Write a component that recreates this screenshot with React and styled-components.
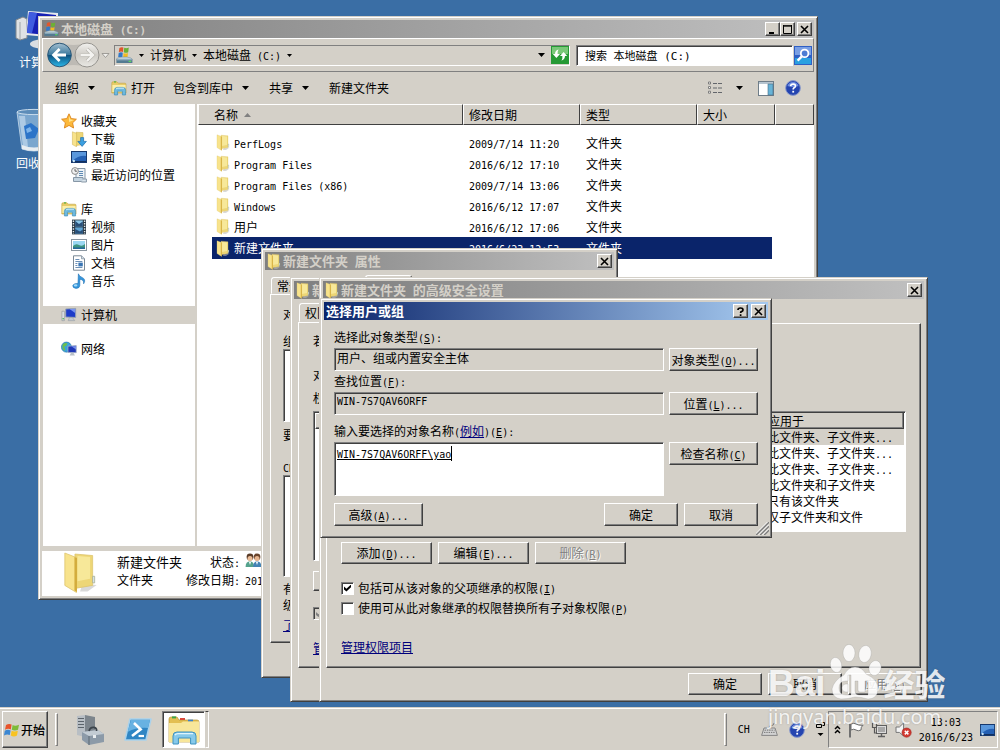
import React from "react";
import styled, { createGlobalStyle, css } from "styled-components";

const face = "#d4d0c8";
const cjk = '"Noto Sans CJK SC", "Liberation Sans", sans-serif';
const mono = '"DejaVu Sans Mono", "Noto Sans CJK SC", monospace';

const Global = createGlobalStyle`
  * { box-sizing: border-box; }
  html, body { margin: 0; }
  body { background: #3a6ea5; color: #000; font: 12px/16px ${cjk}; --latin: 10px; }
  svg { display: block; flex: none; }
  button, input, textarea { font: inherit; color: inherit; margin: 0; border-radius: 0; }
`;

const raised = css`
  background: ${face};
  border: 1px solid;
  border-color: #fff #404040 #404040 #fff;
  box-shadow: inset -1px -1px 0 #808080;
`;
const sunken = css`
  border: 1px solid;
  border-color: #808080 #fff #fff #808080;
  box-shadow: inset 1px 1px 0 #404040;
`;

/* ---------- text ---------- */
const Latin = styled.span`
  font-family: ${mono};
  font-size: var(--latin);
  line-height: 0;
  white-space: pre;
`;
const Key = styled.u``;

// Sets half-width runs in the fixed-width face; "_X" underlines the access key X.
function Text({ children }) {
  return String(children)
    .split(/([\x20-\x7e]+)/)
    .filter(Boolean)
    .map((run, i) => {
      if (!/^[\x20-\x7e]/.test(run)) return run;
      const parts = run.split(/_(\w)/);
      return (
        <Latin key={i}>
          {parts.map((p, j) => (j % 2 ? <Key key={j}>{p}</Key> : p))}
        </Latin>
      );
    });
}

/* ---------- icons ---------- */
const Folder = ({ w = 14, h = 17 }) => (
  <svg width={w} height={h} viewBox="0 0 14 17">
    <path d="M8 13 L13.6 13.4 L10 16 L7 16Z" fill="#b9b9b9" opacity=".55" />
    <path d="M5 1.2 L12 1.8 V13.6 L5 14.8Z" fill="#edd676" stroke="#dcc46c" strokeWidth=".3" />
    <path d="M6 2 L11 2.4 V11 L6 12Z" fill="#fdf3b0" opacity=".6" />
    <path d="M1 0.8 L5.6 2.6 V16.4 L1 13.6Z" fill="#f8e38c" stroke="#dcc46c" strokeWidth=".3" />
    <path d="M4.8 2.4 L5.8 2.8 V16.2 L4.8 15.6Z" fill="#d3ac3c" />
    <path d="M12 10 h.8 v2.6 h-.8z" fill="#dce9f2" stroke="#a4a98a" strokeWidth=".3" />
  </svg>
);
const Flag = ({ size = 16 }) => (
  <svg width={size} height={size} viewBox="0 0 16 16">
    <path d="M2 3 Q5 1 7.6 2.6 L6.8 7.4 Q4 6 1 7.8Z" fill="#e8532a" />
    <path d="M8.6 3 Q11 4.6 15 2.8 L14 7.8 Q11 9.4 7.8 7.8Z" fill="#7dbb38" />
    <path d="M.8 8.8 Q3.6 7 6.6 8.4 L5.8 13 Q3 11.6 0 13.4Z" fill="#3c87d2" />
    <path d="M7.6 8.8 Q10.4 10.4 13.8 8.8 L13 13.6 Q9.6 15.4 6.8 13.4Z" fill="#f8c322" />
  </svg>
);
const Drive = ({ size = 17 }) => (
  <svg width={size} height={size} viewBox="0 0 17 17">
    <path d="M3.4 1 Q5.6 -.4 7.4 .6 L7 5 Q5 4 2.8 5.2Z" fill="#e0562c" />
    <path d="M8.2 .8 Q10.4 1.8 12.8 .6 L12.2 5.2 Q10 6.2 7.8 5.2Z" fill="#6cb035" />
    <path d="M2.7 6 Q5 4.8 6.8 5.8 L6.3 10 H2.2Z" fill="#3278c8" />
    <path d="M7.6 6 Q9.6 7 12 6 L11.5 10 H7.2Z" fill="#f2bb20" />
    <path d="M1.4 11 L6 10 H11 L15 11 L16.4 12.4 H.4Z" fill="#c2d3dc" stroke="#6a8798" strokeWidth=".5" />
    <path d="M.4 12.4 H16.4 V16 H.4Z" fill="#547a91" />
    <path d="M1 12.8 H15.8" stroke="#9cb8c8" />
    <rect x="12.6" y="13.8" width="2.6" height="1.2" fill="#58dc58" />
  </svg>
);
const Library = ({ size = 16 }) => (
  <svg width={size} height={size} viewBox="0 0 16 16">
    <path d="M.8 3 Q.8 1.8 2 1.8 H6 L7.4 3.2 H14 Q15 3.2 15 4.4 V13 H.8Z" fill="#e8cc68" stroke="#c2a341" strokeWidth=".6" />
    <path d="M1.4 5 H14.6 V12 H1.4Z" fill="#fbeea8" />
    <path d="M3 1.9 h2" stroke="#5bb045" strokeWidth="1.2" />
    <path d="M3.4 15 V10.4 Q3.4 7.4 6.4 7.4 H12 Q14.6 7.4 14.6 10 V15 H11.4 V11.2 H6.6 V15Z" fill="#6db9e0" stroke="#3786b2" strokeWidth=".6" />
    <path d="M5 9 Q6 8.2 7 8.2 H13" stroke="#c9edfb" fill="none" />
  </svg>
);
const Star = () => (
  <svg width="16" height="16" viewBox="0 0 16 16">
    <path d="M8 .8 L10.2 5.6 L15.4 6.2 L11.6 9.8 L12.6 15 L8 12.4 L3.4 15 L4.4 9.8 L.6 6.2 L5.8 5.6Z" fill="#fcb93b" stroke="#dd851b" strokeWidth=".9" />
    <path d="M8 3 L9.4 6.6 L13 7 L8 9Z" fill="#ffe48e" />
  </svg>
);
const Download = () => (
  <svg width="16" height="16" viewBox="0 0 16 16">
    <path d="M5 1.2 L12 1.6 V13.6 L5 14.6Z" fill="#edd676" stroke="#cdb050" strokeWidth=".5" />
    <path d="M1.4 .8 L5.6 2.4 V15.8 L1.4 13.6Z" fill="#f8e38c" stroke="#cdb050" strokeWidth=".5" />
    <path d="M9.6 6.6 H12.6 V10.4 H15.4 L11.1 15.4 L6.8 10.4 H9.6Z" fill="#3b9fe0" stroke="#1e6fae" strokeWidth=".7" />
  </svg>
);
const DesktopIcon = ({ w = 16, h = 16 }) => (
  <svg width={w} height={h} viewBox="0 0 16 16" preserveAspectRatio="none">
    <rect x=".5" y="2.5" width="15" height="11" fill="#2460b4" stroke="#16386e" />
    <path d="M1 3 H15 V7 Q8 6 1 12Z" fill="#5a97dc" />
    <path d="M1 12.5 H15" stroke="#12305e" />
    <circle cx="2.8" cy="12" r="1.2" fill="#c7e6fb" />
  </svg>
);
const Recent = () => (
  <svg width="16" height="16" viewBox="0 0 16 16">
    <path d="M5 1.5 H14 V13.5 H5Z" fill="#eef3f7" stroke="#8797a6" />
    <path d="M8 4.5 h4 M8 6.5 h4 M8 8.5 h4" stroke="#5f8ab3" />
    <path d="M2.5 10.5 H12 V14.5 H2.5Z" fill="#c3d3df" stroke="#8797a6" />
    <path d="M12 12 h3.4 v3 h-5" fill="#dbe5ec" stroke="#8797a6" />
    <circle cx="4" cy="4" r="3.4" fill="#f1f1f1" stroke="#8a8a8a" />
    <path d="M4 2 V4.2 H6" stroke="#444" fill="none" strokeWidth=".8" />
  </svg>
);
const Video = () => (
  <svg width="16" height="16" viewBox="0 0 16 16">
    <rect x="1" y=".6" width="14" height="14.8" fill="#2b3a46" />
    <path d="M2.4 1.5 V15 M13.6 1.5 V15" stroke="#dfe6ea" strokeWidth="1.4" strokeDasharray="1.4 1.2" />
    <rect x="4.2" y="1.4" width="7.6" height="6" fill="#8cc7e8" />
    <rect x="4.2" y="8.4" width="7.6" height="6.2" fill="#5fa4d4" />
    <path d="M4.2 2 L8 5 L11.8 2.4 V7.4 H4.2Z M4.2 10 L9 12.6 L11.8 10.6 V14.6 H4.2Z" fill="#294f78" />
  </svg>
);
const Picture = () => (
  <svg width="16" height="16" viewBox="0 0 16 16">
    <rect x=".5" y="2.5" width="15" height="11" fill="#fff" stroke="#8b97a1" />
    <rect x="2" y="4" width="12" height="8" fill="#9bd7f2" />
    <path d="M2 9 Q5 6 8 8 T14 7 V12 H2Z" fill="#3e9480" />
    <path d="M2 10.4 H14 V12 H2Z" fill="#256a9a" />
  </svg>
);
const Doc = () => (
  <svg width="16" height="16" viewBox="0 0 16 16">
    <path d="M2.5 .8 H10.5 L13.5 3.8 V15.2 H2.5Z" fill="#fff" stroke="#7a8996" />
    <path d="M10.5 .8 V3.8 H13.5" fill="#d0dbe5" stroke="#7a8996" strokeWidth=".7" />
    <path d="M4.4 4.5 h4 M4.4 6.5 h7 M4.4 12.5 h7" stroke="#6b8fb5" />
    <rect x="7.4" y="7.6" width="4.4" height="3.8" fill="#3975b4" />
    <path d="M4.4 8.5 h2 M4.4 10.5 h2" stroke="#6b8fb5" />
  </svg>
);
const Music = () => (
  <svg width="16" height="16" viewBox="0 0 16 16">
    <path d="M7.4 .8 Q8 3.4 11 4.4 Q15.4 6.4 12.6 10.8 Q13.4 6.8 8.8 6.2 V12.4 Q8.6 15.4 5 15.4 Q1.6 15 1.8 12.6 Q2.4 10.2 7 10.4Z" fill="#3697dd" stroke="#1b6fb3" strokeWidth=".6" />
    <ellipse cx="4.6" cy="12.4" rx="1.8" ry="1.1" fill="#a5dbf8" />
  </svg>
);
const Computer = () => (
  <svg width="16" height="16" viewBox="0 0 17 16">
    <path d="M1 4 h2.6 v10 h-2.6z" fill="#dfe3e6" stroke="#858c92" strokeWidth=".6" />
    <circle cx="2.3" cy="12" r=".8" fill="#38b03c" />
    <path d="M5 1.6 L15.6 1 V10.6 L5 10.2Z" fill="#1e3cc8" stroke="#9aa5b4" />
    <path d="M9 1.6 H15 V6Z" fill="#7793f2" />
    <path d="M9 10.6 h3 l2.6 3.4 h-7z" fill="#c3c9cf" stroke="#8b929a" strokeWidth=".5" />
  </svg>
);
const Network = () => (
  <svg width="16" height="16" viewBox="0 0 17 16">
    <circle cx="5.8" cy="6" r="5.4" fill="#3aa2dc" stroke="#1e6ca2" strokeWidth=".6" />
    <path d="M2 3 Q5 .6 7 2.4 L5 5 L3 5.6 L4.6 8 L3.4 10 Q.4 7 2 3Z" fill="#6cbf4e" />
    <path d="M7.4 5 L16.2 4.4 V12 L7.4 11.6Z" fill="#2038b8" stroke="#aab3c4" strokeWidth=".8" />
    <path d="M11 5 H16 V8.6Z" fill="#7690ec" />
    <path d="M10.6 12 h2.6 l1.6 2.8 h-5.6z" fill="#b9c0c8" />
  </svg>
);
const Users = () => (
  <svg width="17" height="15" viewBox="0 0 17 15">
    <circle cx="5" cy="4" r="3.4" fill="#5a3c28" />
    <circle cx="5" cy="5.4" r="2.5" fill="#ebbd98" />
    <path d="M.6 14 Q.6 8.6 5 8.6 Q9 8.6 9 14Z" fill="#54a28c" />
    <circle cx="12" cy="4" r="3.4" fill="#6a442c" />
    <circle cx="12" cy="5.4" r="2.5" fill="#e6b590" />
    <path d="M8 14 Q8 8.6 12 8.6 Q16.4 8.6 16.4 14Z" fill="#4483b4" />
    <path d="M4 9 l1 3 l1 -3 M11 9 l1 3 l1 -3" fill="#fff" />
  </svg>
);
const Caret = () => (
  <svg width="7" height="4" viewBox="0 0 7 4"><path d="M0 0 H7 L3.5 4Z" fill="#000" /></svg>
);
const SmallCaret = () => (
  <svg width="5" height="3" viewBox="0 0 5 3"><path d="M0 0 H5 L2.5 3Z" fill="#000" /></svg>
);
const NavArrows = () => (
  <svg width="64" height="26" viewBox="0 0 64 26">
    <defs>
      <linearGradient id="back" x1="0" y1="0" x2="0" y2="1">
        <stop offset="0" stopColor="#a4bfd0" /><stop offset=".48" stopColor="#3d7a9e" />
        <stop offset=".5" stopColor="#0c4f7c" /><stop offset="1" stopColor="#2cb8ea" />
      </linearGradient>
      <linearGradient id="fwd" x1="0" y1="0" x2="0" y2="1">
        <stop offset="0" stopColor="#f2f1ee" /><stop offset=".5" stopColor="#cfccc6" /><stop offset="1" stopColor="#e9e8e4" />
      </linearGradient>
    </defs>
    <path d="M12 1 Q27 5 40 1 V25 Q27 21 12 25Z" fill="#bdbab4" />
    <circle cx="12.5" cy="13" r="11.8" fill="url(#back)" stroke="#2b5777" />
    <circle cx="40" cy="13" r="12" fill="url(#fwd)" stroke="#96948f" />
    <path d="M12.6 7 L6.6 13 L12.6 19 M7 13 H19" stroke="#fff" strokeWidth="2.8" fill="none" />
    <path d="M40 7 L46 13 L40 19 M45.6 13 H33.6" stroke="#b7b4ae" strokeWidth="3.6" fill="none" />
    <path d="M40 7 L46 13 L40 19 M45.6 13 H33.6" stroke="#f4f3f0" strokeWidth="2.4" fill="none" />
    <path d="M55 11.5 H62 L58.5 15.5Z" fill="#f0efec" stroke="#8e8b86" strokeWidth=".8" />
  </svg>
);
const Refresh = () => (
  <svg width="18" height="18" viewBox="0 0 18 18">
    <rect width="18" height="18" fill="#269a35" />
    <rect x="1" y="1" width="16" height="7" fill="#79c878" />
    <path d="M7.6 3.6 Q6.4 5 6.6 8 H9 L5.4 12 L1.8 8 H4 Q4.2 4.4 7.6 3.6Z M10.4 14.6 Q11.6 13 11.4 10 H9 L12.6 6 L16.2 10 H14 Q13.8 13.8 10.4 14.6Z" fill="#fff" />
  </svg>
);
const Magnifier = () => (
  <svg width="18" height="19" viewBox="0 0 18 19">
    <rect width="18" height="19" fill="#2f5fc4" />
    <rect x="1" y="1" width="16" height="8" fill="#7a9fe4" />
    <path d="M1 12 H17 V18 H1Z" fill="#2aa0e0" />
    <circle cx="10.6" cy="7.4" r="3.8" fill="#4d7cd4" stroke="#fff" strokeWidth="1.8" />
    <path d="M7.8 10.4 L3.6 14.6" stroke="#fff" strokeWidth="2.4" />
  </svg>
);
const Views = () => (
  <svg width="16" height="14" viewBox="0 0 16 14">
    <path d="M1.5 1 h2v2h-2z M1.5 5.6 h2v2h-2z M1.5 10.2 h2v2h-2z" fill="#fff" stroke="#7b7b7b" />
    <path d="M6 2.5 h4 M11 2.5 h4 M6 7 h4 M11 7 h4 M6 11.5 h4 M11 11.5 h4" stroke="#63666b" />
  </svg>
);
const Pane = () => (
  <svg width="16" height="15" viewBox="0 0 16 15">
    <rect x=".5" y=".5" width="15" height="14" fill="#fff" stroke="#6f7d88" />
    <rect x="1" y="1" width="14" height="2" fill="#b6c4cf" />
    <rect x="10" y="3" width="5" height="11" fill="#67b3d6" stroke="#456d85" strokeWidth=".6" />
  </svg>
);
const Help = () => (
  <svg width="16" height="16" viewBox="0 0 16 16">
    <circle cx="8" cy="8" r="7.4" fill="#2444b0" stroke="#8d9ccb" />
    <path d="M2.4 6 Q4 2 8 2 T13.6 6 Q8 8 2.4 6Z" fill="#6f8de0" />
    <path d="M5.6 6.2 Q5.8 4 8.2 4 Q10.6 4.2 10.4 6.2 Q10.2 7.4 8.8 8 Q8.2 8.4 8.2 9.6" stroke="#fff" strokeWidth="1.7" fill="none" />
    <rect x="7.3" y="10.8" width="1.8" height="1.8" fill="#fff" />
  </svg>
);
const BigComputer = () => (
  <svg width="44" height="40" viewBox="0 0 44 40">
    <path d="M1 9 L8 6 L12 8 V27 L5 29 L1 27Z" fill="#dfe2e4" stroke="#80868b" />
    <path d="M5 11 V28" stroke="#9fa5aa" />
    <path d="M13 0 L43 2 V27 L11 24Z" fill="#e6e9ee" />
    <path d="M14 1 L41 4 V25 L12 22Z" fill="#1620b4" />
    <path d="M14 1 L22 2 L17 22 L12 22Z" fill="#3f5ce0" />
    <ellipse cx="27" cy="33" rx="12" ry="4.5" fill="#d9dde2" />
  </svg>
);
const Bin = () => (
  <svg width="38" height="44" viewBox="0 0 38 44">
    <path d="M2 4 L36 4 L31 41 Q19 45 7 41Z" fill="#86b0d6" opacity=".85" stroke="#c9dcec" />
    <path d="M4 8 L8 38 L13 40 L10 8Z" fill="#c3daee" opacity=".7" />
    <path d="M9 18 l7 -3 l8 6 l-4 9 l-9 1z" fill="#2c74c8" />
    <path d="M11 21 l4 -2 l2 4 l-5 2z" fill="#7db4ea" />
    <ellipse cx="19" cy="4" rx="17" ry="2.6" fill="#5d8db9" stroke="#c9dcec" />
    <path d="M7 37 Q19 42 31 37 V41 Q19 45 7 41Z" fill="#e8edf1" />
  </svg>
);
const ServerTools = () => (
  <svg width="28" height="30" viewBox="0 0 28 30">
    <path d="M1 1 L9 0 V22 L1 20Z" fill="#b8bec4" /><path d="M9 0 L19 2 V22 H9Z" fill="#7d858c" />
    <path d="M2 3.5 H8 M2 6.5 H8 M2 9.5 H8 M2 12.5 H8" stroke="#5c646b" />
    <path d="M6 17 L22 15 L28 19 V27 L13 30 L6 25Z" fill="#8c9aa8" />
    <path d="M6 17 L22 15 L28 19 L13 21Z" fill="#c3ccd4" />
    <path d="M13 21 V30" stroke="#5d6873" />
    <path d="M13 16 Q14 12 18 12.4 Q21 13 20.6 16" stroke="#3d444b" fill="none" strokeWidth="1.6" />
    <rect x="17" y="20" width="3" height="3" fill="#e9edf0" />
  </svg>
);
const PowerShell = () => (
  <svg width="30" height="26" viewBox="0 0 30 26">
    <path d="M7 2 H28 L23 23 H2Z" fill="#2f86c4" stroke="#a9d2ec" strokeWidth="1.6" strokeLinejoin="round" />
    <path d="M8 3 H27 L25 11 Q14 10 4.6 15Z" fill="#68b2e2" />
    <path d="M11 6 L17.6 12.4 L9 19" stroke="#fff" strokeWidth="2.6" fill="none" />
    <path d="M15.6 19 H21" stroke="#fff" strokeWidth="2.2" />
  </svg>
);
const Explorer = () => (
  <svg width="34" height="30" viewBox="0 0 34 30">
    <path d="M2 4 Q2 2 4 2 H10 L12 5 H30 Q32 5 32 7 V27 H2Z" fill="#e3bf52" stroke="#b8953a" strokeWidth=".7" />
    <path d="M5 2.4 h4" stroke="#3da447" strokeWidth="2" /><path d="M13 4 h5" stroke="#d94a3a" strokeWidth="2" /><path d="M21 5.6 h5" stroke="#3b80c8" strokeWidth="2" />
    <path d="M2 8 H14 L16 6.6 H32 V27 H2Z" fill="#f8e69a" />
    <path d="M6 29 V21 Q6 17 10 17 H25 Q29 17 29 21 V29 H23.6 V23 H11.4 V29Z" fill="#86c9ea" stroke="#3e92bf" />
    <path d="M8 20 Q9 18.6 11 18.6 H26" stroke="#dff5fd" fill="none" strokeWidth="1.4" />
  </svg>
);
const Keyboard = () => (
  <svg width="17" height="13" viewBox="0 0 17 13">
    <path d="M3 5 H14 L16.4 12.4 H.6Z" fill="#d2d2d2" stroke="#868686" />
    <path d="M3.6 7.2 H13.6 M3 9.4 H14" stroke="#777" strokeDasharray="1.4 .9" />
    <path d="M8 5 Q8 2.4 10.4 2.6 T13 0" stroke="#868686" fill="none" />
  </svg>
);
const Restore = () => (
  <svg width="9" height="16" viewBox="0 0 9 16">
    <path d="M3.5 .5 h5 v3 h-2 M.5 2.5 h5 v3 h-5z" stroke="#000" fill="none" />
    <path d="M1.5 11 h6 L4.5 14Z" fill="#000" />
  </svg>
);
const Chevrons = () => (
  <svg width="7" height="9" viewBox="0 0 7 9">
    <path d="M1 4 L3.5 1.4 L6 4 M1 8 L3.5 5.4 L6 8" stroke="#000" strokeWidth="1.4" fill="none" />
  </svg>
);
const WhiteFlag = () => (
  <svg width="16" height="16" viewBox="0 0 16 16">
    <path d="M2 1 V15.5" stroke="#707070" strokeWidth="2" />
    <path d="M3 2 Q6 .6 8 2 T15 3.4 Q12.6 4.6 13 8 Q10 9.6 8 8 T3 8Z" fill="#fff" stroke="#6d6d6d" />
  </svg>
);
const Lan = () => (
  <svg width="17" height="16" viewBox="0 0 17 16">
    <rect x="5.5" y="3.5" width="10" height="8" fill="#dcdcdc" stroke="#606060" />
    <rect x="7" y="5" width="7" height="5" fill="#a8a8a8" />
    <path d="M7 14.5 H14 M10.5 12 V14" stroke="#606060" strokeWidth="1.4" />
    <path d="M1.5 1 V5.5 H5.5 V1 M3.5 5.5 V11 H6" stroke="#585858" fill="none" strokeWidth="1.2" />
  </svg>
);
const Speaker = () => (
  <svg width="17" height="16" viewBox="0 0 17 16">
    <path d="M1 5 H4.4 L8.6 1 V14 L4.4 10.4 H1Z" fill="#f3f3f3" stroke="#777" />
    <circle cx="11.6" cy="10.6" r="4.6" fill="#d23a32" stroke="#9f221d" strokeWidth=".6" />
    <path d="M9.8 8.8 L13.4 12.4 M13.4 8.8 L9.8 12.4" stroke="#fff" strokeWidth="1.5" />
  </svg>
);

/* ---------- window frame ---------- */
const Window = styled.section`
  position: absolute;
  left: ${(p) => p.$x}px;
  top: ${(p) => p.$y}px;
  width: ${(p) => p.$w}px;
  padding: 3px;
  background: ${face};
  border: 1px solid;
  border-color: ${face} #404040 #404040 ${face};
  box-shadow: inset 1px 1px 0 #fff, inset -1px -1px 0 #808080;
`;
const TitleBar = styled.header`
  display: flex;
  align-items: center;
  gap: 2px;
  height: 18px;
  padding: 0 2px;
  font-weight: 700;
  font-size: 13px;
  --latin: 11px;
  white-space: nowrap;
  color: ${(p) => (p.$active ? "#fff" : face)};
  background: linear-gradient(90deg, ${(p) => (p.$active ? "#0a246a, #a6caf0" : "#808080, #c0c0c0")});
`;
const TitleText = styled.h2`
  flex: 1;
  margin: 0;
  font: inherit;
`;
const CaptionButtons = styled.div`
  display: flex;
  gap: ${(p) => p.$gap || 0}px;
`;
const CaptionButton = styled.button`
  ${raised}
  display: grid;
  place-items: center;
  width: 15px;
  height: 14px;
  padding: 0;
`;
const glyphs = {
  close: <path d="M1 1 L8 8 M8 1 L1 8" stroke="#000" strokeWidth="1.6" />,
  min: <path d="M1 8 H6" stroke="#000" strokeWidth="2" />,
  max: <path d="M.5 1 H8.5 M.5 0 V8.5 H8.5 V0 M0 .8 H9" stroke="#000" fill="none" />,
  help: <path d="M2 3 Q2 1 4.5 1 T7 3 Q7 4 5.4 4.6 Q4.6 5 4.6 6 M4.6 7.2 V9" stroke="#000" strokeWidth="1.7" fill="none" />,
};
const Caption = ({ kind, label }) => (
  <CaptionButton type="button" aria-label={label}>
    <svg width="9" height="9" viewBox="0 0 9 9">{glyphs[kind]}</svg>
  </CaptionButton>
);

const Button = styled.button`
  ${raised}
  width: ${(p) => p.$w || 74}px;
  height: ${(p) => p.$h || 23}px;
  padding: 0;
  white-space: nowrap;
  &:disabled { color: #808080; text-shadow: 1px 1px 0 #fff; }
`;
const Link = styled.a`
  color: #00007b;
  text-decoration: underline;
`;
const Tabs = styled.div`
  display: flex;
  align-items: flex-end;
  height: ${(p) => p.$h}px;
  padding-left: ${(p) => p.$x}px;
`;
const Tab = styled.button`
  width: 47px;
  height: ${(p) => (p.$on ? 19 : 17)}px;
  padding: 0 5px;
  background: ${face};
  border: 1px solid;
  border-color: #fff #404040 transparent #fff;
  border-radius: 3px 3px 0 0;
  text-align: left;
`;
const Page = styled.div`
  display: flex;
  flex-direction: column;
  align-items: flex-start;
  margin: 0 ${(p) => p.$side}px;
  border: 1px solid;
  border-color: #fff #404040 #404040 #fff;
  box-shadow: inset -1px -1px 0 #808080;
`;

/* ---------- explorer ---------- */
const AddressBar = styled.div`
  display: flex;
  align-items: center;
  height: 34px;
  padding: 0 1px 0 4px;
  border: 1px solid;
  border-color: #fff #808080 #808080 #fff;
`;
const Crumbs = styled.nav`
  ${sunken}
  box-shadow: none;
  flex: 1;
  display: flex;
  align-items: center;
  gap: 6px;
  height: 21px;
  margin-left: 3px;
  padding-left: 1px;
`;
const Crumb = styled.a`
  color: inherit;
  text-decoration: none;
`;
const IconButton = styled.button`
  display: grid;
  place-items: center;
  padding: 0;
  border: 0;
  background: none;
`;
const Push = styled.span`
  margin-left: auto;
`;
const SearchInput = styled.input`
  ${sunken}
  width: 217px;
  height: 21px;
  margin: 0 1px 0 6px;
  padding: 0 8px;
  background: #fff;
  font: 11px/16px ${mono};
`;
const Toolbar = styled.div`
  display: flex;
  align-items: center;
  height: 32px;
  padding: 0 13px;
`;
const ToolButton = styled.button`
  display: flex;
  align-items: center;
  gap: ${(p) => p.$gap || 9}px;
  margin-right: ${(p) => p.$after || 0}px;
  padding: 0;
  border: 0;
  background: none;
`;
const Panes = styled.div`
  display: flex;
  min-height: 442px;
`;
const Tree = styled.nav`
  width: 153px;
  padding-top: 8px;
  background: #fff;
  border-left: 1px solid ${face};
`;
const Group = styled.ul`
  list-style: none;
  margin: 0 0 16px;
  padding: 0;
`;
const TreeItem = styled.li`
  display: flex;
  align-items: center;
  gap: 4px;
  height: 18px;
  padding-left: ${(p) => (p.$deep ? 28 : 18)}px;
  background: ${(p) => (p.$on ? face : "none")};
`;
const FileArea = styled.div`
  flex: 1;
  margin-left: 2px;
  background: #fff;
  border-left: 1px solid #fff;
`;
const Files = styled.table`
  width: 100%;
  table-layout: fixed;
  border-spacing: 0;
  td, th { padding: 0; text-align: left; font-weight: 400; white-space: nowrap; }
  tbody::before { content: ""; display: block; height: 7px; }
`;
const HeadCell = styled.th`
  height: 21px;
  background: ${face};
  border: 1px solid;
  border-color: #fff #404040 #404040 #fff;
  && { padding-left: ${(p) => p.$pad || 5}px; }
`;
const HeadLabel = styled.span`
  display: flex;
  align-items: center;
  gap: 6px;
`;
const Row = styled.tr`
  height: ${(p) => (p.$on ? 22 : 21)}px;
  color: ${(p) => (p.$on ? "#fff" : "#000")};
  td { background: ${(p) => (p.$on ? "#0a246a" : "none")}; background-clip: padding-box; }
  && td { padding-left: 6px; }
  && td:first-child { padding-left: 4px; border-left: 14px solid transparent; }
  && td:nth-child(4) { border-right: 3px solid transparent; }
  && td:last-child { background: none; }
`;
const NameCell = styled.span`
  display: flex;
  align-items: center;
  gap: 4px;
`;
const Details = styled.footer`
  display: flex;
  height: 45px;
  margin-top: 5px;
  padding-left: 18px;
  background: #fff;
`;
const DetailCol = styled.div`
  display: flex;
  flex-direction: column;
  align-items: ${(p) => (p.$end ? "flex-end" : "flex-start")};
  margin-left: ${(p) => p.$before}px;
  line-height: 18px;
  padding-top: 2px;
`;
const DetailName = styled.strong`
  font-weight: 400;
  font-size: 13px;
`;
const DetailIcon = styled.span`
  height: 18px;
`;

const files = [
  ["PerfLogs", "2009/7/14 11:20"],
  ["Program Files", "2016/6/12 17:10"],
  ["Program Files (x86)", "2009/7/14 13:06"],
  ["Windows", "2016/6/12 17:07"],
  ["用户", "2016/6/12 17:06"],
  ["新建文件夹", "2016/6/23 12:53"],
];
const tree = [
  [[Star, "收藏夹"], [Download, "下载"], [DesktopIcon, "桌面"], [Recent, "最近访问的位置"]],
  [[Library, "库"], [Video, "视频"], [Picture, "图片"], [Doc, "文档"], [Music, "音乐"]],
  [[Computer, "计算机"]],
  [[Network, "网络"]],
];

function ExplorerWindow() {
  return (
    <Window $x={38} $y={16} $w={780}>
      <TitleBar>
        <Drive size={15} />
        <TitleText><Text>本地磁盘 (C:)</Text></TitleText>
        <CaptionButtons>
          <Caption kind="min" label="最小化" />
          <Caption kind="max" label="最大化" />
        </CaptionButtons>
        <Caption kind="close" label="关闭" />
      </TitleBar>
      <AddressBar>
        <NavArrows />
        <Crumbs>
          <Drive />
          <SmallCaret />
          <Crumb href="#computer">计算机</Crumb>
          <SmallCaret />
          <Crumb href="#disk"><Text>本地磁盘 (C:)</Text></Crumb>
          <SmallCaret />
          <Push><Caret /></Push>
          <IconButton type="button" aria-label="刷新"><Refresh /></IconButton>
        </Crumbs>
        <SearchInput aria-label="搜索" defaultValue="搜索 本地磁盘 (C:)" />
        <IconButton type="button" aria-label="搜索"><Magnifier /></IconButton>
      </AddressBar>
      <Toolbar>
        <ToolButton $after={16}>组织<Caret /></ToolButton>
        <ToolButton $gap={4} $after={18}><Library />打开</ToolButton>
        <ToolButton $after={20}>包含到库中<Caret /></ToolButton>
        <ToolButton $after={20}>共享<Caret /></ToolButton>
        <ToolButton>新建文件夹</ToolButton>
        <Push />
        <ToolButton $gap={13} $after={15} aria-label="视图"><Views /><Caret /></ToolButton>
        <ToolButton $after={11} aria-label="预览窗格"><Pane /></ToolButton>
        <ToolButton aria-label="帮助"><Help /></ToolButton>
      </Toolbar>
      <Panes>
        <Tree>
          {tree.map((group, g) => (
            <Group key={g}>
              {group.map(([Icon, label], i) => (
                <TreeItem key={label} $deep={i > 0} $on={label === "计算机"}>
                  <Icon />{label}
                </TreeItem>
              ))}
            </Group>
          ))}
        </Tree>
        <FileArea>
          <Files>
            <colgroup>
              <col style={{ width: 265 }} />
              <col style={{ width: 117 }} />
              <col style={{ width: 117 }} />
              <col style={{ width: 78 }} />
              <col />
            </colgroup>
            <thead>
              <tr>
                <HeadCell $pad={15}>
                  <HeadLabel>
                    名称
                    <svg width="7" height="4" viewBox="0 0 7 4"><path d="M0 4 H7 L3.5 0Z" fill="#808080" /></svg>
                  </HeadLabel>
                </HeadCell>
                <HeadCell>修改日期</HeadCell>
                <HeadCell>类型</HeadCell>
                <HeadCell>大小</HeadCell>
                <HeadCell />
              </tr>
            </thead>
            <tbody>
              {files.map(([name, date], i) => (
                <Row key={name} $on={i === 5}>
                  <td><NameCell><Folder /><span><Text>{name}</Text></span></NameCell></td>
                  <td><Text>{date}</Text></td>
                  <td>文件夹</td>
                  <td />
                  <td />
                </Row>
              ))}
            </tbody>
          </Files>
        </FileArea>
      </Panes>
      <Details>
        <Folder w={40} h={43} />
        <DetailCol $before={17}>
          <DetailName>新建文件夹</DetailName>
          <span>文件夹</span>
        </DetailCol>
        <DetailCol $before={4} $end>
          <span><Text>状态:</Text></span>
          <span><Text>修改日期:</Text></span>
        </DetailCol>
        <DetailCol $before={5}>
          <DetailIcon><Users /></DetailIcon>
          <span><Text>2016/6/23 12:53</Text></span>
        </DetailCol>
      </Details>
    </Window>
  );
}

/* ---------- property sheets ---------- */
const Line = styled.p`
  margin: ${(p) => p.$before || 0}px 0 0;
  line-height: 16px;
  white-space: nowrap;
`;
const ListBox = styled.div`
  ${sunken}
  align-self: stretch;
  height: ${(p) => p.$h}px;
  margin: ${(p) => p.$before || 0}px 14px 0 0;
  background: #fff;
`;
const SheetBody = styled(Page)`
  height: ${(p) => p.$h}px;
  padding: ${(p) => p.$top}px 0 0 ${(p) => p.$left}px;
`;
const ListHead = styled.div`
  ${raised}
  height: 16px;
  margin: 1px;
`;
const Foot = styled.footer`
  height: ${(p) => p.$h}px;
`;

function PropertiesWindow() {
  return (
    <Window $x={261} $y={248} $w={357}>
      <TitleBar>
        <Folder />
        <TitleText><Text>新建文件夹 属性</Text></TitleText>
        <Caption kind="close" label="关闭" />
      </TitleBar>
      <Tabs $h={24} $x={6}>
        <Tab>常规</Tab><Tab>共享</Tab><Tab $on>安全</Tab>
      </Tabs>
      <SheetBody $side={5} $h={349} $top={11} $left={12}>
        <Line>对象名称</Line>
        <Line $before={11}>组或用户名</Line>
        <ListBox $h={73} />
        <Line $before={5}>要更改权限</Line>
        <Line $before={16}><Text>CREATOR OWNER</Text></Line>
        <ListBox $h={102} />
        <Line $before={4}>有关特殊权限</Line>
        <Line>级设置</Line>
        <Line $before={4}><Link href="#learn">了解访问控制和权限</Link></Line>
      </SheetBody>
      <Foot $h={31} />
    </Window>
  );
}

function AdvancedWindow() {
  return (
    <Window $x={290} $y={277} $w={600}>
      <TitleBar>
        <Folder />
        <TitleText>新建文件夹</TitleText>
      </TitleBar>
      <Tabs $h={23} $x={5}><Tab $on>权限</Tab></Tabs>
      <SheetBody $side={4} $h={346} $top={10} $left={14}>
        <Line>若要查看</Line>
        <Line $before={18}>对象名称</Line>
        <Line $before={7}>权限项目</Line>
        <ListBox $h={150} $before={5}><ListHead /></ListBox>
        <Line $before={10}><Button $h={20}>更改权限</Button></Line>
        <Line $before={16}><CheckBox type="checkbox" aria-label="继承" defaultChecked disabled /></Line>
        <Line $before={20}><Link href="#manage">管理权限</Link></Line>
      </SheetBody>
      <Foot $h={30} />
    </Window>
  );
}

const CheckBox = styled.input`
  ${sunken}
  appearance: none;
  display: grid;
  place-items: center;
  flex: none;
  width: 13px;
  height: 13px;
  background: #fff;
  &:disabled { background: ${face}; color: #808080; }
  &:checked::before {
    content: "";
    width: 7px;
    height: 7px;
    background: currentColor;
    clip-path: polygon(0 30%, 35% 60%, 100% 0, 100% 38%, 35% 100%, 0 70%);
  }
`;
const Check = styled.label`
  display: flex;
  align-items: center;
  gap: 4px;
  height: 20px;
  white-space: nowrap;
`;
const PermPage = styled(Page)`
  margin-top: 24px;
  padding: 87px 14px 12px 14px;
  align-items: stretch;
`;
const PermList = styled.div`
  ${sunken}
  display: flex;
  justify-content: flex-end;
  height: 121px;
  padding: 1px;
  background: #fff;
`;
const PermTable = styled.table`
  width: 100%;
  table-layout: fixed;
  border-spacing: 0;
  align-self: flex-start;
  th, td { padding: 0; height: 16px; line-height: 16px; text-align: left; font-weight: 400; white-space: nowrap; }
  th { ${raised} border-top: 0; line-height: 15px; }
  td:first-child, th:first-child { width: 424px; }
  tbody tr:first-child { background: ${face}; }
`;
const ButtonRow = styled.div`
  display: flex;
  justify-content: ${(p) => (p.$end ? "flex-end" : "flex-start")};
  gap: 6px;
  padding: ${(p) => p.$pad || "0"};
`;
const applies = ["此文件夹、子文件夹...", "此文件夹、子文件夹...", "此文件夹、子文件夹...", "此文件夹和子文件夹", "只有该文件夹", "仅子文件夹和文件"];

function PermissionsWindow() {
  return (
    <Window $x={319} $y={277} $w={609}>
      <TitleBar>
        <Folder />
        <TitleText><Text>新建文件夹 的高级安全设置</Text></TitleText>
        <Caption kind="close" label="关闭" />
      </TitleBar>
      <PermPage $side={3}>
        <PermList>
          <PermTable>
            <thead><tr><th /><th>应用于</th></tr></thead>
            <tbody>
              {applies.map((a, i) => (
                <tr key={i}><td /><td><Text>{a}</Text></td></tr>
              ))}
            </tbody>
          </PermTable>
        </PermList>
        <ButtonRow $pad="10px 0 14px">
          <Button $w={91} $h={22}><Text>添加(_D)...</Text></Button>
          <Button $w={91} $h={22}><Text>编辑(_E)...</Text></Button>
          <Button $w={91} $h={22} disabled><Text>删除(_R)</Text></Button>
        </ButtonRow>
        <Check><CheckBox type="checkbox" defaultChecked /><span><Text>包括可从该对象的父项继承的权限(_I)</Text></span></Check>
        <Check><CheckBox type="checkbox" /><span><Text>使用可从此对象继承的权限替换所有子对象权限(_P)</Text></span></Check>
        <Line $before={21}><Link href="#items">管理权限项目</Link></Line>
      </PermPage>
      <ButtonRow $end $pad="5px 2px 3px">
        <Button $h={22}>确定</Button>
        <Button $h={22}>取消</Button>
        <Button $h={22} disabled><Text>应用(_A)</Text></Button>
      </ButtonRow>
    </Window>
  );
}

/* ---------- select users dialog ---------- */
const Form = styled.form`
  display: grid;
  grid-template-columns: 1fr 89px;
  column-gap: 5px;
  align-items: start;
  padding: 7px 10px 0;
`;
const FieldLabel = styled.label`
  grid-column: 1 / -1;
  height: 21px;
  line-height: 20px;
  margin-top: ${(p) => p.$before || 0}px;
`;
const Field = styled.input`
  ${sunken}
  height: 23px;
  padding: 0 2px 4px;
  background: ${face};
  font: ${(p) => (p.$mono ? `10px/16px ${mono}` : "inherit")};
`;
const NameBox = styled.div`
  position: relative;
  display: flex;
`;
const Names = styled.textarea`
  ${sunken}
  flex: 1;
  height: 54px;
  padding: 4px 2px;
  background: #fff;
  resize: none;
  font: 10px/16px ${mono};
  text-decoration: underline;
`;
const TextCursor = styled.span`
  position: absolute;
  left: 117px;
  top: 4px;
  width: 1px;
  height: 15px;
  background: #000;
`;
const DialogFoot = styled.div`
  grid-column: 1 / -1;
  display: flex;
  gap: 6px;
  padding: 7px 0 8px;
`;
const Grip = styled.svg`
  position: absolute;
  right: 2px;
  bottom: 2px;
`;

function SelectDialog() {
  return (
    <Window $x={320} $y={298} $w={452} role="dialog" aria-label="选择用户或组">
      <TitleBar $active>
        <TitleText>选择用户或组</TitleText>
        <CaptionButtons $gap={3}>
          <Caption kind="help" label="帮助" />
          <Caption kind="close" label="关闭" />
        </CaptionButtons>
      </TitleBar>
      <Form>
        <FieldLabel htmlFor="kind"><Text>选择此对象类型(_S):</Text></FieldLabel>
        <Field id="kind" readOnly value="用户、组或内置安全主体" />
        <Button type="button" $w={89}><Text>对象类型(_O)...</Text></Button>
        <FieldLabel htmlFor="place"><Text>查找位置(_F):</Text></FieldLabel>
        <Field id="place" $mono readOnly value="WIN-7S7QAV6ORFF" />
        <Button type="button" $w={89}><Text>位置(_L)...</Text></Button>
        <FieldLabel htmlFor="names" $before={6}>
          <Text>输入要选择的对象名称(</Text><Link href="#example">例如</Link><Text>)(_E):</Text>
        </FieldLabel>
        <NameBox>
          <Names id="names" spellCheck={false} defaultValue={"WIN-7S7QAV6ORFF\\yao"} />
          <TextCursor />
        </NameBox>
        <Button type="button" $w={89}><Text>检查名称(_C)</Text></Button>
        <DialogFoot>
          <Button type="button" $w={89}><Text>高级(_A)...</Text></Button>
          <Push />
          <Button type="button">确定</Button>
          <Button type="button">取消</Button>
        </DialogFoot>
      </Form>
      <Grip width="13" height="13" viewBox="0 0 13 13">
        <path d="M0 13 L13 0 M4 13 L13 4 M8 13 L13 8" stroke="#808080" strokeWidth="1.6" />
        <path d="M-1.5 13 L13 -1.5 M2.5 13 L13 2.5 M6.5 13 L13 6.5" stroke="#fff" />
      </Grip>
    </Window>
  );
}

/* ---------- desktop and taskbar ---------- */
const Screen = styled.main`
  display: flex;
  flex-direction: column;
  min-height: 100vh;
  position: relative;
  overflow: hidden;
`;
const Desktop = styled.div`
  flex: 1;
  position: relative;
  min-height: 707px;
`;
const Shortcuts = styled.div`
  display: flex;
  flex-direction: column;
  align-items: flex-start;
  gap: 38px;
  padding: 11px 0 0 15px;
  color: #fff;
`;
const Shortcut = styled.a`
  display: flex;
  flex-direction: column;
  align-items: center;
  gap: 3px;
  color: inherit;
  text-decoration: none;
`;
const Taskbar = styled.footer`
  position: relative;
  display: flex;
  align-items: center;
  height: 43px;
  padding: 2px 2px 0;
  background: ${face};
  box-shadow: inset 0 1px 0 ${face}, inset 0 2px 0 #fff;
`;
const Start = styled.button`
  ${raised}
  display: flex;
  align-items: center;
  gap: 1px;
  width: 46px;
  height: 37px;
  padding: 0 0 0 1px;
  font-weight: 500;
`;
const Separator = styled.span`
  width: 3px;
  height: 33px;
  margin: ${(p) => p.$m};
  border: 1px solid;
  border-color: #fff #808080 #808080 #fff;
`;
const TaskButton = styled.button`
  display: grid;
  place-items: center;
  width: ${(p) => p.$w || 48}px;
  height: 37px;
  padding: 0;
  border: 0;
  background: none;
  ${(p) => p.$on && css`${sunken} background: #fff;`}
`;
const StackEdge = styled.span`
  width: 4px;
  height: 37px;
  background: ${face};
  border: 1px solid;
  border-color: #404040 #fff #fff ${face};
`;
const LangBar = styled.div`
  display: flex;
  align-items: center;
  gap: 11px;
  margin-right: 3px;
`;
const Tray = styled.div`
  ${sunken}
  box-shadow: none;
  display: flex;
  align-items: center;
  gap: 7px;
  height: 37px;
  padding: 0 2px 0 5px;
`;
const Clock = styled.time`
  text-align: center;
  font: 10px/15px ${mono};
`;

const Watermark = styled.div`
  position: absolute;
  left: 768px;
  top: 641px;
  color: rgba(255, 255, 255, 0.85);
  text-shadow: 0 0 2px rgba(90, 90, 90, 0.35);
  white-space: nowrap;
  pointer-events: none;
`;
const Brand = styled.div`
  display: flex;
  align-items: flex-end;
  height: 60px;
  font: 700 37px/34px "Liberation Sans", sans-serif;
`;
const BrandCn = styled.span`
  font: 700 31px/36px ${cjk};
`;
const Site = styled.div`
  margin-top: 4px;
  font: 20px/24px "Noto Sans", sans-serif;
`;

export default function App() {
  return (
    <Screen>
      <Global />
      <Desktop>
        <Shortcuts>
          <Shortcut href="#my-computer"><BigComputer />计算机</Shortcut>
          <Shortcut href="#bin"><Bin />回收站</Shortcut>
        </Shortcuts>
        <ExplorerWindow />
        <PropertiesWindow />
        <AdvancedWindow />
        <PermissionsWindow />
        <SelectDialog />
      </Desktop>
      <Taskbar>
        <Start type="button"><Flag />开始</Start>
        <Separator $m="0 8px 0 7px" />
        <TaskButton aria-label="服务器管理器"><ServerTools /></TaskButton>
        <TaskButton aria-label="PowerShell"><PowerShell /></TaskButton>
        <TaskButton $on $w={43} aria-label="资源管理器"><Explorer /></TaskButton>
        <StackEdge />
        <Push />
        <LangBar>
          <Separator $m="0" />
          <Latin>CH</Latin>
          <Keyboard />
          <Help />
          <Restore />
        </LangBar>
        <Tray>
          <Chevrons />
          <WhiteFlag />
          <Lan />
          <Speaker />
          <Clock>13:03<br />2016/6/23</Clock>
          <DesktopIcon w={15} h={16} />
        </Tray>
      </Taskbar>
      <Watermark>
        <Brand>
          Bai
          <svg width="58" height="58" viewBox="0 0 58 58">
            <g fill="#fff" fillOpacity=".85" stroke="#8c8c8c" strokeOpacity=".3" strokeWidth=".8">
              <ellipse cx="10" cy="22" rx="5.6" ry="7.6" transform="rotate(-12 10 22)" />
              <ellipse cx="23" cy="10" rx="6" ry="8.6" />
              <ellipse cx="39" cy="11" rx="6.2" ry="8.6" transform="rotate(10 39 11)" />
              <ellipse cx="49" cy="25" rx="6" ry="7.6" transform="rotate(16 49 25)" />
              <path fillRule="evenodd" d="M29 24 Q36 24 40 31 Q53 37 52 47 Q51 56 42 56 Q35 54 29 54 Q22 56 15 56 Q6 55 6 46 Q8 37 18 32 Q22 24 29 24Z M20 38 Q13 38 13 45 Q13 52 20 52 H25 V32 H22 V38Z M20 41 H22 V49 H20 Q16 49 16 45 T20 41Z M29 38 V48 Q29 52 33 52 H42 V38 H39 V49 H34 Q32 49 32 47 V38Z" />
            </g>
          </svg>
          <BrandCn>经验</BrandCn>
        </Brand>
        <Site>jingyan.baidu.com</Site>
      </Watermark>
    </Screen>
  );
}
